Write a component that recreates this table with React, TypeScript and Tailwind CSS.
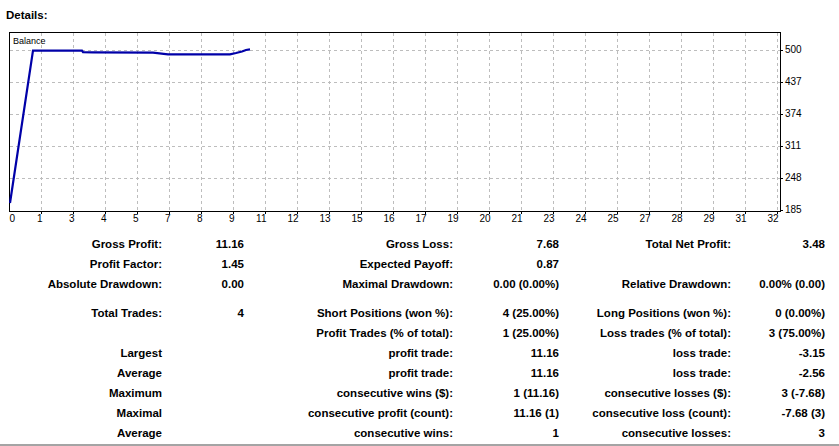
import React from "react";

const xLabels = [1, 3, 4, 5, 7, 8, 9, 11, 12, 13, 15, 16, 17, 19, 20, 21, 23, 24, 25, 27, 28, 29, 31, 32];
const yLabels: [string, number][] = [
  ["500", 50],
  ["437", 82],
  ["374", 114],
  ["311", 146],
  ["248", 178],
  ["185", 210],
];

type Row = string[] | null;
const rows: Row[] = [
  ["Gross Profit:", "11.16", "Gross Loss:", "7.68", "Total Net Profit:", "3.48"],
  ["Profit Factor:", "1.45", "Expected Payoff:", "0.87", "", ""],
  ["Absolute Drawdown:", "0.00", "Maximal Drawdown:", "0.00 (0.00%)", "Relative Drawdown:", "0.00% (0.00)"],
  null,
  ["Total Trades:", "4", "Short Positions (won %):", "4 (25.00%)", "Long Positions (won %):", "0 (0.00%)"],
  ["", "", "Profit Trades (% of total):", "1 (25.00%)", "Loss trades (% of total):", "3 (75.00%)"],
  ["Largest", "", "profit trade:", "11.16", "loss trade:", "-3.15"],
  ["Average", "", "profit trade:", "11.16", "loss trade:", "-2.56"],
  ["Maximum", "", "consecutive wins ($):", "1 (11.16)", "consecutive losses ($):", "3 (-7.68)"],
  ["Maximal", "", "consecutive profit (count):", "11.16 (1)", "consecutive loss (count):", "-7.68 (3)"],
  ["Average", "", "consecutive wins:", "1", "consecutive losses:", "3"],
];

function Chart() {
  const grid = "#bdbdbd";
  const font = "'Liberation Sans', Arial, sans-serif";
  return (
    <svg width={839} height={204} viewBox="0 30 839 204" className="block">
      {/* horizontal grid */}
      {[50, 82, 114, 146, 178].map((y) => (
        <line key={"h" + y} x1={10} x2={780} y1={y + 0.5} y2={y + 0.5} stroke={grid} strokeWidth={1} strokeDasharray="3 3" shapeRendering="crispEdges" />
      ))}
      {/* vertical grid */}
      {xLabels.map((_, k) => {
        const x = 41 + 32 * k + 0.5;
        return <line key={"v" + k} x1={x} x2={x} y1={33} y2={211} stroke={grid} strokeWidth={1} strokeDasharray="3 3" shapeRendering="crispEdges" />;
      })}
      {/* frame */}
      <rect x={9.5} y={32.5} width={771} height={179} fill="none" stroke="#000" strokeWidth={1} shapeRendering="crispEdges" />
      {/* y ticks & labels */}
      {yLabels.map(([t, y]) => (
        <g key={t}>
          <line x1={781} x2={783} y1={y + 0.5} y2={y + 0.5} stroke="#000" strokeWidth={1} shapeRendering="crispEdges" />
          <text x={785} y={y + 3} fontSize={10} fontFamily={font} fill="#000">
            {t}
          </text>
        </g>
      ))}
      {/* x ticks & labels */}
      <text x={9.5} y={222} fontSize={10} fontFamily={font} fill="#000">
        0
      </text>
      {xLabels.map((n, k) => {
        const x = 41 + 32 * k + 0.5;
        return (
          <g key={"x" + n}>
            <line x1={x} x2={x} y1={212} y2={214} stroke="#000" strokeWidth={1} shapeRendering="crispEdges" />
            <text x={x + 1} y={222} fontSize={10} fontFamily={font} fill="#000" textAnchor="end">
              {n}
            </text>
          </g>
        );
      })}
      <text x={13} y={44} fontSize={9} fontFamily={font} fill="#000">
        Balance
      </text>
      <polyline
        points="10,203 33,50.7 82,50.7 83,52.2 93,52.4 153,52.6 168,54.3 230,54.3 236,53 242,51.5 246,50 250,49.3"
        fill="none"
        stroke="#0000a8"
        strokeWidth={2.2}
        strokeLinejoin="miter"
      />
    </svg>
  );
}

export default function App() {
  return (
    <div
      className="w-[839px] h-[446px] bg-white text-black overflow-hidden flex flex-col"
      style={{ fontFamily: "'Liberation Sans', Arial, sans-serif" }}
    >
      <div className="h-[30px] pt-[5px] pl-[6px] text-[11.5px] leading-[20px] font-bold">Details:</div>
      <Chart />
      <div className="grid grid-cols-[162px_82px_209px_106px_172px_94px] text-[11.5px] font-bold leading-[20px]">
        {rows.map((r, i) =>
          r === null ? (
            <div key={i} className="col-span-6 h-[9px]" />
          ) : (
            r.map((c, j) => (
              <div key={i + "-" + j} className="h-[20px] text-right whitespace-nowrap">
                {c}
              </div>
            ))
          )
        )}
      </div>
      <div className="flex-1" />
      <div className="h-[2px] bg-[#a4a4a4]" />
    </div>
  );
}
